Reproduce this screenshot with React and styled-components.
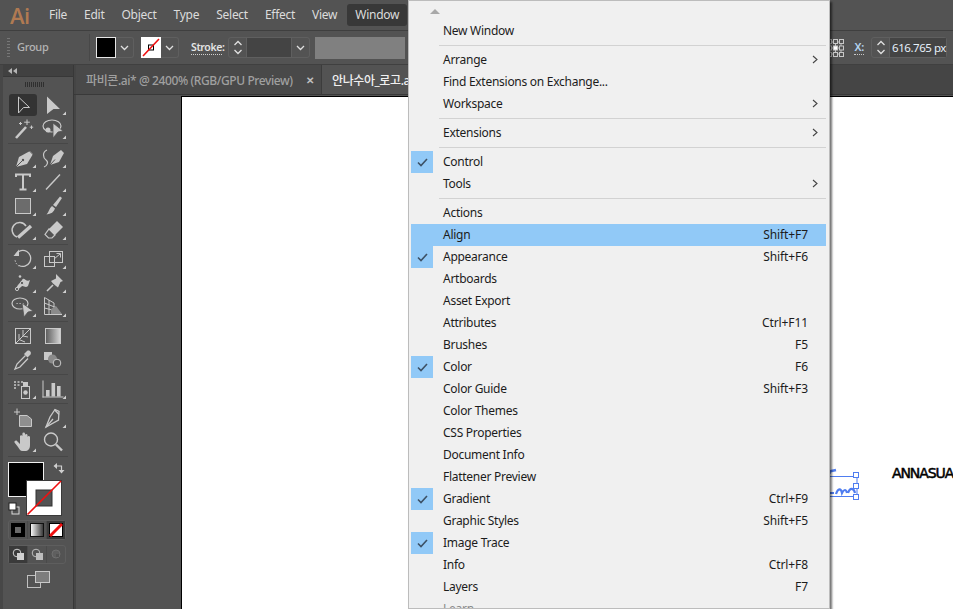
import React from 'react'
import styled, { createGlobalStyle } from 'styled-components'

const UI_FONT = '"Noto Sans", "Noto Sans CJK KR", sans-serif'

const menuSections = [
  [{ label: 'New Window' }],
  [{ label: 'Arrange', sub: true }, { label: 'Find Extensions on Exchange...' }, { label: 'Workspace', sub: true }],
  [{ label: 'Extensions', sub: true }],
  [{ label: 'Control', checked: true }, { label: 'Tools', sub: true }],
  [
    { label: 'Actions' },
    { label: 'Align', shortcut: 'Shift+F7', active: true },
    { label: 'Appearance', shortcut: 'Shift+F6', checked: true },
    { label: 'Artboards' },
    { label: 'Asset Export' },
    { label: 'Attributes', shortcut: 'Ctrl+F11' },
    { label: 'Brushes', shortcut: 'F5' },
    { label: 'Color', shortcut: 'F6', checked: true },
    { label: 'Color Guide', shortcut: 'Shift+F3' },
    { label: 'Color Themes' },
    { label: 'CSS Properties' },
    { label: 'Document Info' },
    { label: 'Flattener Preview' },
    { label: 'Gradient', shortcut: 'Ctrl+F9', checked: true },
    { label: 'Graphic Styles', shortcut: 'Shift+F5' },
    { label: 'Image Trace', checked: true },
    { label: 'Info', shortcut: 'Ctrl+F8' },
    { label: 'Layers', shortcut: 'F7' },
    { label: 'Learn', muted: true }
  ]
]

const topMenu = ['File', 'Edit', 'Object', 'Type', 'Select', 'Effect', 'View', 'Window']

const INK = '#c9c9c9'

// each tool is drawn in a 30x24 cell, centre at 15,12
const toolGroups = [
  [
    { selected: true, draw: <path d="M10.5 4 L21.5 14.5 L15.5 14.5 L10.5 20 Z" fill="none" stroke={INK} /> },
    { corner: true, draw: <path d="M9 3.5 L22 16 L15.5 16 L9 21 Z" fill={INK} /> },
    {
      draw: (
        <g>
          <path d="M8 21 L18 10" stroke={INK} strokeWidth="2.6" />
          <path d="M19 2.5 V8 M16.2 5.2 H21.8 M23.5 8.5 V12 M21.8 10.2 H25.2 M12.5 5 V8 M11 6.5 H14" stroke={INK} />
        </g>
      )
    },
    {
      corner: true,
      draw: (
        <g>
          <ellipse cx="14" cy="9" rx="9" ry="6" fill="none" stroke={INK} strokeWidth="1.2" />
          <circle cx="10" cy="13" r="2.5" fill={INK} />
          <path d="M15 6 L25 14 L20 15 L15 21 Z" fill={INK} stroke="#535353" strokeWidth="0.8" />
        </g>
      )
    }
  ],
  [
    {
      corner: true,
      draw: (
        <g>
          <path d="M22 5 L25 8 L19 18 L8 21 L11 11 Z" fill={INK} />
          <path d="M8 21 L14.5 14.5" stroke="#535353" />
          <circle cx="15" cy="14" r="1.2" fill="#535353" />
          <path d="M20 3.5 L26 9.5" stroke="#535353" />
        </g>
      )
    },
    {
      corner: true,
      draw: (
        <g>
          <path d="M23 4 L26 7 L21 16 L12 19 L15 10 Z" fill={INK} />
          <path d="M12 19 L17 13.5" stroke="#535353" />
          <path d="M9 4 C4 6 5 12 8 14 C11 16 9 20 6 21" fill="none" stroke={INK} strokeWidth="1.2" />
        </g>
      )
    },
    {
      corner: true,
      draw: <path d="M8 7 V4.5 H22 V7 M15 4.5 V19 M11.5 19.5 H18.5" fill="none" stroke={INK} strokeWidth="2" />
    },
    { corner: true, draw: <path d="M8 19.5 L22 4.5" stroke={INK} strokeWidth="1.4" /> },
    { draw: <rect x="7.5" y="4.5" width="15" height="15" fill="#6c6c6c" stroke={INK} />, corner: true },
    {
      corner: true,
      draw: (
        <g>
          <path d="M22 2.5 L24 4 L18 13 L15 11 Z" fill={INK} />
          <path d="M14 12 L17 14.5 C16 18 13 20 8.5 20.5 C11 18 11 14.5 14 12 Z" fill={INK} />
        </g>
      )
    },
    {
      corner: true,
      draw: (
        <g>
          <path d="M9 19 A7.5 7.5 0 1 1 18 8" fill="none" stroke={INK} strokeWidth="1.5" />
          <path d="M10 19.5 L23 8" stroke={INK} strokeWidth="3.4" />
        </g>
      )
    },
    {
      corner: true,
      draw: (
        <g>
          <path d="M19 3 L25 9 L17 17 L11 11 Z" fill={INK} />
          <path d="M11 11 L17 17 L14 20 H10.5 L7 16.5 Z" fill="none" stroke={INK} strokeWidth="1.2" />
        </g>
      )
    }
  ],
  [
    {
      corner: true,
      draw: (
        <g>
          <path d="M8 7 A8 8 0 1 1 11 18.5" fill="none" stroke={INK} strokeWidth="1.3" />
          <path d="M11 19 A8 8 0 0 1 7 12" fill="none" stroke={INK} strokeDasharray="1.4 1.4" />
          <path d="M11 2.5 V9 H5.5 Z" fill={INK} />
        </g>
      )
    },
    {
      corner: true,
      draw: (
        <g>
          <rect x="6.5" y="9.5" width="10" height="10" fill="none" stroke={INK} />
          <rect x="11.5" y="4.5" width="13" height="11" fill="none" stroke={INK} />
          <path d="M16 12 L22 7 M18.5 6.5 H22.5 V10.5" fill="none" stroke={INK} />
        </g>
      )
    },
    {
      corner: true,
      draw: (
        <g>
          <path d="M8 19 C9 13 12 13 14 9 C16 5 18 12 22 9 L20 15 C17 18 15 13 13 16 C11 18 9 19 8 19 Z" fill={INK} />
          <circle cx="9" cy="18" r="1.6" fill="#535353" stroke={INK} />
          <circle cx="14" cy="12" r="1.6" fill="#535353" stroke={INK} />
          <circle cx="12" cy="5.5" r="1.3" fill={INK} />
        </g>
      )
    },
    {
      corner: true,
      draw: (
        <g>
          <path d="M18 3 L25 10 L22.5 11 L20 16.5 L18 15 L15 12.5 L13 10 L18 7.5 Z" fill={INK} />
          <path d="M15 14 L9 20" stroke={INK} strokeWidth="1.6" />
        </g>
      )
    },
    {
      corner: true,
      draw: (
        <g>
          <ellipse cx="12" cy="8.5" rx="8" ry="5.5" fill="none" stroke={INK} strokeWidth="1.2" />
          <path d="M8.5 8.5 H9.7 M11.5 8.5 H12.7 M14.5 8.5 H15.7" stroke={INK} />
          <path d="M14 8 L25 16 L20 17 L16 22 Z" fill={INK} stroke="#535353" strokeWidth="0.8" />
        </g>
      )
    },
    {
      corner: true,
      draw: (
        <g>
          <path d="M6.5 2.5 V19.5 H24 M6.5 2.5 L16 8 V19 M6.5 8 L19 13 M6.5 13 L22 17 M11 5 V19" fill="none" stroke={INK} />
          <path d="M13 14 L18 11 L24 19 H13 Z" fill="#8a8a8a" />
        </g>
      )
    }
  ],
  [
    {
      draw: (
        <g fill="none" stroke={INK}>
          <rect x="7.5" y="4.5" width="15" height="15" />
          <path d="M8 19 L15 12 L22 5 M15 12 L15 6 M15 12 L20 13 M11 15.5 L11 10 M11 15.5 L17 18" />
        </g>
      )
    },
    {
      draw: (
        <g>
          <defs>
            <linearGradient id="toolGrad" x1="0" x2="1" y1="0" y2="0">
              <stop offset="0" stopColor="#5a5a5a" />
              <stop offset="1" stopColor="#d8d8d8" />
            </linearGradient>
          </defs>
          <rect x="7.5" y="4.5" width="15" height="15" fill="url(#toolGrad)" stroke={INK} />
        </g>
      )
    },
    {
      corner: true,
      draw: (
        <g>
          <path d="M19 3 C21 1.5 24 4 22.5 6.5 L19.5 9.5 L16 6 Z" fill={INK} />
          <path d="M17.5 7.5 L9 16 L7 21 L12 19 L20 10.5" fill="none" stroke={INK} strokeWidth="1.3" />
        </g>
      )
    },
    {
      draw: (
        <g>
          <rect x="6" y="4" width="8" height="8" fill={INK} />
          <circle cx="14.5" cy="11" r="4.5" fill="#8a8a8a" />
          <circle cx="19" cy="15" r="3.8" fill="#535353" stroke={INK} />
        </g>
      )
    }
  ],
  [
    {
      corner: true,
      draw: (
        <g>
          <path d="M6 5 H8 M9.5 5 H11.5 M13 5 H15 M6 8 H8 M9.5 8 H11.5 M6 11 H8" stroke={INK} strokeWidth="1.6" />
          <rect x="13.5" y="9.5" width="8" height="12" fill="none" stroke={INK} />
          <rect x="15" y="5" width="5" height="4" fill={INK} />
          <circle cx="17.5" cy="15.5" r="2.2" fill={INK} />
        </g>
      )
    },
    {
      corner: true,
      draw: (
        <g fill={INK}>
          <rect x="4.5" y="3.5" width="1" height="17" />
          <rect x="4.5" y="19.5" width="21" height="1" />
          <rect x="8" y="13" width="3.6" height="6.5" />
          <rect x="13.5" y="6" width="3.6" height="13.5" />
          <rect x="19" y="9" width="3.6" height="10.5" />
        </g>
      )
    }
  ],
  [
    {
      draw: (
        <g>
          <path d="M6 6 H12 M9 2.5 V9" stroke={INK} />
          <path d="M11.5 9.5 H19 L23.5 13 V20.5 H11.5 Z" fill="#8f8f8f" stroke={INK} />
        </g>
      )
    },
    {
      corner: true,
      draw: (
        <g fill="none" stroke={INK} strokeWidth="1.3">
          <path d="M8 21 L12 11 L17 3.5 L21 5.5 L20.5 14 Z" />
          <path d="M8 21 L15 13 M16.5 3.8 L21 8.5" />
        </g>
      )
    },
    {
      corner: true,
      draw: (
        <path
          d="M9 11 L12 14 V6 A1.3 1.3 0 0 1 14.4 6 V3.7 A1.3 1.3 0 0 1 17 3.7 V5 A1.3 1.3 0 0 1 19.5 5 V7 A1.3 1.3 0 0 1 22 7 V15 C22 19 20 21 17 21 H14.5 C12 21 11.5 19 10 17 L6.5 12.5 C6 11 8 10 9 11 Z"
          fill={INK}
        />
      )
    },
    {
      draw: (
        <g fill="none" stroke={INK}>
          <circle cx="13" cy="9.5" r="6.5" strokeWidth="1.4" />
          <path d="M18 14.5 L24 20.5" strokeWidth="2.4" />
        </g>
      )
    }
  ]
]

const GlobalStyle = createGlobalStyle`
  html, body {
    margin: 0;
    padding: 0;
    background: #535353;
  }
  * { box-sizing: border-box; }
`

const Page = styled.div`
  position: relative;
  width: 953px;
  height: 609px;
  overflow: hidden;
  display: flex;
  flex-direction: column;
  font-family: ${UI_FONT};
  font-size: 12px;
  letter-spacing: -0.27px;
  background: #535353;
`

const MenuBar = styled.div`
  height: 31px;
  flex: none;
  display: flex;
  align-items: center;
  padding-left: 10px;
  background: #535353;
  border-bottom: 1px solid #3f3f3f;
`
const Logo = styled.div`
  width: 31px;
  font-family: "Open Sans", sans-serif;
  font-size: 22px;
  font-weight: 600;
  letter-spacing: -0.5px;
  color: #b07a52;
`
const MenuItem = styled.div`
  height: 22px;
  line-height: 21px;
  padding: 0 8px;
  margin-right: 1px;
  margin-left: ${p => (p.$open ? 1 : 0)}px;
  border-radius: 3px;
  color: #dcdcdc;
  background: ${p => (p.$open ? '#383838' : 'transparent')};
`

const ControlBar = styled.div`
  height: 34px;
  flex: none;
  display: flex;
  align-items: center;
  padding-left: 7px;
  background: #535353;
  border-bottom: 1px solid #404040;
`
const Grip = styled.div`
  width: 3px;
  height: 20px;
  margin-right: 7px;
  background: repeating-linear-gradient(#777 0 1px, transparent 1px 3px);
`
const SelectionName = styled.div`
  width: 73px;
  height: 100%;
  line-height: 31px;
  color: #b4b4b4;
  font-size: 11px;
  font-weight: 500;
  position: relative;
  &::after {
    content: '';
    position: absolute;
    right: 0;
    top: 3px;
    bottom: 3px;
    width: 1px;
    background: #484848;
  }
`
const ColorCombo = styled.div`
  width: 38px;
  height: 21px;
  margin-left: ${p => p.$gap}px;
  display: flex;
  align-items: stretch;
  border: 1px solid #5f5f5f;
  border-left: 0;
  border-radius: 0 3px 3px 0;
`
const Swatch = styled.div`
  width: 20px;
  margin: -1px 0;
  flex: none;
  background: #000;
  border: 1px solid #e6e6e6;
`
const NoStrokeSwatch = styled.svg`
  width: 20px;
  height: 21px;
  margin-top: -1px;
  flex: none;
`
const DropCell = styled.div`
  flex: 1;
  display: flex;
  align-items: center;
  justify-content: center;
`
const StrokeLabel = styled.div`
  width: 31px;
  margin-left: 12px;
  color: #e4e4e4;
  font-size: 10.5px;
  font-weight: 600;
  letter-spacing: -0.35px;
  line-height: 14px;
  white-space: nowrap;
  border-bottom: 1px dotted #d0d0d0;
`
const StepperBox = styled.div`
  display: flex;
  align-items: stretch;
  height: 21px;
  margin-left: ${p => p.$gap}px;
  width: ${p => p.$width}px;
  border: 1px solid #5f5f5f;
  border-radius: 3px;
`
const StepperArrows = styled.div`
  width: 18px;
  flex: none;
  display: flex;
  align-items: center;
  justify-content: center;
  border-right: 1px solid #5f5f5f;
`
const StepperValue = styled.div`
  flex: 1;
  background: #444444;
  color: #e6f0fa;
  font-size: 11.5px;
  letter-spacing: -0.45px;
  line-height: 19px;
  padding-left: 2px;
  white-space: nowrap;
`
const StepperDrop = styled.div`
  width: 18px;
  flex: none;
  display: flex;
  align-items: center;
  justify-content: center;
  border-left: 1px solid #5f5f5f;
`
const StrokeProfile = styled.div`
  width: 90px;
  height: 22px;
  margin-left: 5px;
  background: #808080;
`
const ControlRight = styled.div`
  margin-left: auto;
  display: flex;
  align-items: center;
  padding-right: 6px;
`
const AxisLabel = styled.div`
  margin-left: 10px;
  color: #b5d4f0;
  font-size: 11px;
  font-weight: 600;
  line-height: 14px;
  border-bottom: 1px dotted #c8c8c8;
`

const Workspace = styled.div`
  flex: 1;
  min-height: 0;
  display: flex;
`

const ToolsPanel = styled.div`
  width: 74px;
  flex: none;
  background: #535353;
  border-left: 3px solid #474747;
  border-right: 1px solid #383838;
  display: flex;
  flex-direction: column;
`
const ToolsHeader = styled.div`
  height: 12px;
  flex: none;
  display: flex;
  align-items: center;
  padding-left: 5px;
  background: #414141;
  border-bottom: 1px solid #383838;
`
const ToolsGrip = styled.div`
  height: 14px;
  flex: none;
  display: flex;
  justify-content: center;
  align-items: center;
  padding-right: 6px;
  &::before {
    content: '';
    width: 20px;
    height: 5px;
    background: repeating-linear-gradient(90deg, #2f2f2f 0 1px, transparent 1px 2px);
  }
`
const ToolGroup = styled.div`
  margin: 0 5px;
  padding: 2px 0;
  display: grid;
  grid-template-columns: 30px 30px;
  grid-auto-rows: 24px;
  border-bottom: 1px solid #474747;
`
const ToolCell = styled.div`
  position: relative;
  display: flex;
  align-items: center;
  justify-content: center;
  &::before {
    content: '';
    display: ${p => (p.$selected ? 'block' : 'none')};
    position: absolute;
    left: 1px;
    right: 1px;
    top: 1px;
    bottom: 1px;
    border-radius: 3px;
    background: #333333;
  }
`
const ToolSvg = styled.svg`
  position: relative;
  display: block;
`
const FillStroke = styled.svg`
  display: block;
  margin: 3px 0 0 5px;
  flex: none;
`
const ModeRow = styled.div`
  width: 58px;
  height: ${p => p.$height}px;
  margin: ${p => p.$top}px 0 0 5px;
  flex: none;
  display: flex;
  border: 1px solid #5e5e5e;
  border-radius: 3px;
`
const ModeButton = styled.div`
  flex: 1;
  display: flex;
  align-items: center;
  justify-content: center;
  border-right: 1px solid #4a4a4a;
  background: ${p => (p.$on ? '#3a3a3a' : 'transparent')};
  &:last-child { border-right: 0; }
`
const ScreenMode = styled.svg`
  display: block;
  margin: 7px 0 0 24px;
  flex: none;
`

const DocArea = styled.div`
  flex: 1;
  min-width: 0;
  display: flex;
  flex-direction: column;
`
const TabStrip = styled.div`
  height: 30px;
  flex: none;
  display: flex;
  padding-left: 2px;
  background: #454545;
  border-bottom: 1px solid #393939;
`
const DocTab = styled.div`
  width: ${p => p.$width}px;
  flex: none;
  display: flex;
  align-items: center;
  justify-content: space-between;
  padding: 0 7px 0 10px;
  font-size: 12px;
  font-weight: 500;
  letter-spacing: -0.4px;
  white-space: nowrap;
  color: ${p => (p.$active ? '#f0f0f0' : '#a0a0a0')};
  background: ${p => (p.$active ? '#535353' : '#494949')};
  border-right: 1px solid #3c3c3c;
`
const CloseMark = styled.span`
  color: #c0c0c0;
  font-size: 10px;
  font-weight: 700;
`
const CanvasArea = styled.div`
  flex: 1;
  min-height: 0;
  padding: 1px 0 0 105px;
  background: #535353;
  border-left: 2px solid #454545;
`
const Artboard = styled.div`
  position: relative;
  height: 100%;
  background: #fff;
  border-top: 1px solid #000;
  border-left: 1px solid #000;
`
const ArtSelection = styled.svg`
  position: absolute;
  left: 590px;
  top: 370px;
`
const ArtLogo = styled.div`
  position: absolute;
  left: 710px;
  top: 368px;
  color: #000;
  font-family: "DejaVu Sans", sans-serif;
  font-size: 14px;
  font-weight: 400;
  letter-spacing: -1.1px;
  -webkit-text-stroke: 0.5px #000;
  white-space: nowrap;
`

const DropMenu = styled.div`
  position: absolute;
  left: 408px;
  top: 0;
  width: 422px;
  height: 609px;
  overflow: hidden;
  padding: 0 3px 0 2px;
  background: #f0f0f0;
  border: 1px solid #bcbcbc;
  box-shadow: 2px 2px 2px rgba(0, 0, 0, 0.55);
  color: #1c1c1c;
  font-size: 12px;
`
const ScrollUp = styled.div`
  height: 19px;
  display: flex;
  justify-content: flex-start;
  padding: 8px 0 0 19px;
  &::before {
    content: '';
    width: 0;
    height: 0;
    border-left: 5px solid transparent;
    border-right: 5px solid transparent;
    border-bottom: 5px solid #a8a8a8;
  }
`
const MenuDivider = styled.div`
  height: 1px;
  margin: 3px 0 3px 28px;
  background: #d2d2d2;
`
const MenuRow = styled.div`
  height: 22px;
  display: flex;
  align-items: center;
  background: ${p => (p.$active ? '#91c9f7' : 'transparent')};
  color: ${p => (p.$muted ? '#8a8a8a' : '#1c1c1c')};
`
const CheckBox = styled.div`
  width: 22px;
  height: 22px;
  flex: none;
  display: flex;
  align-items: center;
  justify-content: center;
  background: ${p => (p.$on ? '#91c9f7' : 'transparent')};
`
const RowLabel = styled.div`
  flex: 1;
  margin-left: 10px;
  padding-bottom: 2px;
  white-space: nowrap;
`
const RowShortcut = styled.div`
  padding-bottom: 2px;
  letter-spacing: -0.1px;
  white-space: nowrap;
`
const RowArrow = styled.div`
  width: 18px;
  flex: none;
  display: flex;
  align-items: center;
  justify-content: flex-end;
  padding: 0 8px 2px 0;
`

function Chevron () {
  return (
    <svg width="9" height="6" viewBox="0 0 9 6">
      <path d="M1 1 L4.5 4.5 L8 1" fill="none" stroke="#e0e0e0" strokeWidth="1.3" />
    </svg>
  )
}

function Stepper ({ gap, width, value, drop }) {
  return (
    <StepperBox $gap={gap} $width={width}>
      <StepperArrows>
        <svg width="10" height="17" viewBox="0 0 10 17">
          <path d="M1.5 6 L5 2.5 L8.5 6 M1.5 11 L5 14.5 L8.5 11" fill="none" stroke="#e0e0e0" strokeWidth="1.3" />
        </svg>
      </StepperArrows>
      <StepperValue>{value}</StepperValue>
      {drop && <StepperDrop><Chevron /></StepperDrop>}
    </StepperBox>
  )
}

function ReferenceGrid () {
  const spots = [2, 8, 14]
  return (
    <svg width="17" height="18" viewBox="0 0 17 18">
      <path d="M3 3 H14 V15 H3 Z M3 9 H14 M8.5 3 V15" fill="none" stroke="#bdbdbd" />
      {spots.map(y => spots.map(x => (
        <rect
          key={`${x}-${y}`}
          x={x - 1.5}
          y={y - 1.5 + (y === 14 ? 1 : 0) + (y === 8 ? 0.5 : 0)}
          width="4"
          height="4"
          fill={x === 8 && y === 8 ? '#fff' : '#535353'}
          stroke="#c8c8c8"
        />
      )))}
    </svg>
  )
}

function Tools () {
  return (
    <ToolsPanel>
      <ToolsHeader>
        <svg width="9" height="6" viewBox="0 0 9 6">
          <path d="M4 0 V6 L0 3 Z M9 0 V6 L5 3 Z" fill="#b5b5b5" />
        </svg>
      </ToolsHeader>
      <ToolsGrip />
      {toolGroups.map((tools, g) => (
        <ToolGroup key={g}>
          {tools.map((tool, i) => (
            <ToolCell key={i} $selected={tool.selected}>
              <ToolSvg width="30" height="24" viewBox="0 0 30 24">
                {tool.draw}
                {tool.corner && <path d="M28 22 V18.5 L24.5 22 Z" fill="#d0d0d0" />}
              </ToolSvg>
            </ToolCell>
          ))}
        </ToolGroup>
      ))}
      <FillStroke width="58" height="58" viewBox="0 0 58 58">
        <rect x="0.5" y="2.5" width="35" height="34" fill="#000" stroke="#f0f0f0" />
        <rect x="18.5" y="20.5" width="35" height="35" fill="#fff" stroke="#3a3a3a" />
        <rect x="28" y="30" width="16" height="16" fill="#535353" stroke="#333" />
        <path d="M19.5 54.5 L53 21" stroke="#f01010" strokeWidth="1.6" />
        <path d="M48 6 H53.5 V10" fill="none" stroke="#cfcfcf" strokeWidth="1.2" />
        <path d="M49 3 V9 L45.5 6 Z M50.5 10 H56.5 L53.5 13.5 Z" fill="#cfcfcf" />
        <rect x="4" y="47" width="7" height="7" fill="#535353" stroke="#dcdcdc" />
        <rect x="1" y="43" width="7" height="7" fill="#fff" stroke="#222" />
      </FillStroke>
      <ModeRow $height={20} $top={2}>
        <ModeButton>
          <svg width="14" height="14" viewBox="0 0 14 14"><rect x="0" y="0" width="14" height="14" fill="#000" /><rect x="4" y="4" width="6" height="6" fill="#6a6a6a" /></svg>
        </ModeButton>
        <ModeButton>
          <svg width="14" height="14" viewBox="0 0 14 14">
            <defs>
              <linearGradient id="modeGrad" x1="0" x2="1" y1="0" y2="0">
                <stop offset="0" stopColor="#fff" />
                <stop offset="1" stopColor="#333" />
              </linearGradient>
            </defs>
            <rect x="0.5" y="0.5" width="13" height="13" fill="url(#modeGrad)" stroke="#111" />
          </svg>
        </ModeButton>
        <ModeButton $on>
          <svg width="14" height="14" viewBox="0 0 14 14"><rect x="0.5" y="0.5" width="13" height="13" fill="#fff" stroke="#000" /><path d="M1 13 L13 1" stroke="#f01010" strokeWidth="3" /></svg>
        </ModeButton>
      </ModeRow>
      <ModeRow $height={19} $top={5}>
        <ModeButton $on>
          <svg width="13" height="13" viewBox="0 0 13 13"><circle cx="5" cy="5" r="3.8" fill="#3a3a3a" stroke="#d0d0d0" /><rect x="5" y="5" width="7" height="7" fill="#d0d0d0" /></svg>
        </ModeButton>
        <ModeButton>
          <svg width="13" height="13" viewBox="0 0 13 13"><circle cx="5" cy="5" r="3.8" fill="#535353" stroke="#bdbdbd" /><rect x="5" y="5" width="7" height="7" fill="#bdbdbd" /></svg>
        </ModeButton>
        <ModeButton>
          <svg width="13" height="13" viewBox="0 0 13 13"><circle cx="6" cy="6" r="4" fill="#5f5f5f" stroke="#6f6f6f" /><rect x="6" y="6" width="3" height="3" fill="#535353" /></svg>
        </ModeButton>
      </ModeRow>
      <ScreenMode width="23" height="17" viewBox="0 0 23 17">
        <rect x="0.5" y="4.5" width="13" height="12" fill="none" stroke="#c0c0c0" />
        <rect x="8.5" y="0.5" width="14" height="11" fill="#7d7d7d" stroke="#c8c8c8" />
      </ScreenMode>
    </ToolsPanel>
  )
}

function WindowMenu () {
  return (
    <DropMenu>
      <ScrollUp />
      {menuSections.map((rows, s) => (
        <React.Fragment key={s}>
          {s > 0 && <MenuDivider />}
          {rows.map(row => (
            <MenuRow key={row.label} $active={row.active} $muted={row.muted}>
              <CheckBox $on={row.checked}>
                {row.checked && (
                  <svg width="11" height="9" viewBox="0 0 11 9">
                    <path d="M1 4.5 L4 7.5 L10 1" fill="none" stroke="#3d5166" strokeWidth="1.6" />
                  </svg>
                )}
              </CheckBox>
              <RowLabel>{row.label}</RowLabel>
              {row.shortcut && <RowShortcut>{row.shortcut}</RowShortcut>}
              <RowArrow>
                {row.sub && (
                  <svg width="6" height="9" viewBox="0 0 6 9">
                    <path d="M1 1 L5 4.5 L1 8" fill="none" stroke="#444" strokeWidth="1.1" />
                  </svg>
                )}
              </RowArrow>
            </MenuRow>
          ))}
        </React.Fragment>
      ))}
    </DropMenu>
  )
}

export default function App () {
  return (
    <Page>
      <GlobalStyle />
      <MenuBar>
        <Logo>Ai</Logo>
        {topMenu.map(name => (
          <MenuItem key={name} $open={name === 'Window'}>{name}</MenuItem>
        ))}
      </MenuBar>
      <ControlBar>
        <Grip />
        <SelectionName>Group</SelectionName>
        <ColorCombo $gap={6}>
          <Swatch />
          <DropCell><Chevron /></DropCell>
        </ColorCombo>
        <ColorCombo $gap={7}>
          <NoStrokeSwatch viewBox="0 0 20 21">
            <rect x="0" y="0" width="20" height="21" fill="#fff" />
            <rect x="7.5" y="8" width="5" height="5" fill="none" stroke="#000" />
            <path d="M2 19 L18 2" stroke="#f01010" strokeWidth="1.6" />
          </NoStrokeSwatch>
          <DropCell><Chevron /></DropCell>
        </ColorCombo>
        <StrokeLabel>Stroke:</StrokeLabel>
        <Stepper gap={6} width={82} value="" drop />
        <StrokeProfile />
        <ControlRight>
          <ReferenceGrid />
          <AxisLabel>X:</AxisLabel>
          <Stepper gap={7} width={76} value="616.765 px" />
        </ControlRight>
      </ControlBar>
      <Workspace>
        <Tools />
        <DocArea>
          <TabStrip>
            <DocTab $width={246}>
              파비콘.ai* @ 2400% (RGB/GPU Preview)
              <CloseMark>✕</CloseMark>
            </DocTab>
            <DocTab $width={200} $active>안나수아_로고.ai</DocTab>
          </TabStrip>
          <CanvasArea>
            <Artboard>
              <ArtSelection width="90" height="36" viewBox="0 0 90 36">
                <path d="M58 7 C56 4 60 4 64 3" fill="none" stroke="#4f7df0" strokeWidth="2.4" />
                <path d="M57 26 H62 M64 27 C66 21 69 21 70 26 C72 22 74 22 75 26 M76 26 C78 20 82 21 83 26" fill="none" stroke="#4f7df0" strokeWidth="2.2" />
                <path d="M56 9.5 H85 V29.5 H56" fill="none" stroke="#4f7df0" />
                <rect x="81.5" y="5.5" width="5" height="5" fill="#fff" stroke="#4f7df0" />
                <rect x="81.5" y="16.5" width="5" height="5" fill="#fff" stroke="#4f7df0" />
                <rect x="81.5" y="27.5" width="5" height="5" fill="#fff" stroke="#4f7df0" />
              </ArtSelection>
              <ArtLogo>ANNASUA</ArtLogo>
            </Artboard>
          </CanvasArea>
        </DocArea>
      </Workspace>
      <WindowMenu />
    </Page>
  )
}
